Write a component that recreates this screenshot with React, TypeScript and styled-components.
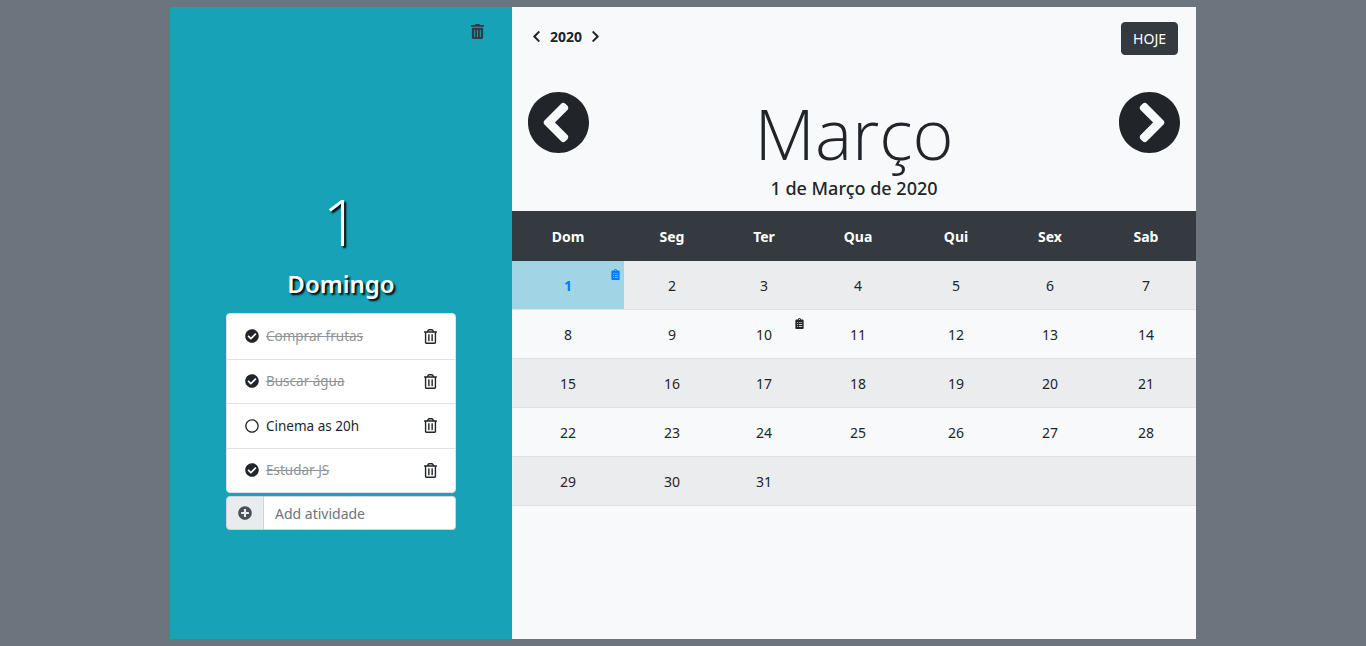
import { createGlobalStyle, styled } from "styled-components";
import {
  FaCheckCircle,
  FaChevronCircleLeft,
  FaChevronCircleRight,
  FaChevronLeft,
  FaChevronRight,
  FaClipboardList,
  FaPlusCircle,
  FaRegCircle,
  FaRegTrashAlt,
  FaTrashAlt,
} from "react-icons/fa";

const GlobalStyle = createGlobalStyle`
  * { box-sizing: border-box; }
  body {
    margin: 0;
    background-color: #6c757d;
    color: #212529;
    font-family: "Noto Sans", "Open Sans", sans-serif;
    font-size: 14px;
  }
`;

const columns = "112px 96px 88px 100px 96px 92px 100px";

const Page = styled.div`
  display: flex;
  justify-content: flex-start;
  height: 646px;
  padding: 7px 0 7px 170px;
`;

const DayPanel = styled.aside`
  background-color: #17a2b8;
  display: flex;
  flex-direction: column;
  align-items: center;
  width: 342px;
  padding: 17px 0 0;
`;

const DeleteAll = styled.div`
  align-self: flex-end;
  color: #343a40;
  display: flex;
  font-size: 15px;
  height: 16px;
  margin: 0 27px 0 0;
`;

const DayNumber = styled.div`
  color: #fff;
  font-family: "Open Sans", sans-serif;
  font-size: 64px;
  font-weight: 300;
  line-height: 88px;
  margin: 138px 0 0;
  text-shadow: 2px 2px 2px #000;
`;

const DayName = styled.div`
  color: #fff;
  font-size: 24px;
  font-weight: 600;
  line-height: 32px;
  margin: 2px 0 0;
  text-shadow: 2px 2px 2px #000;
`;

const Tasks = styled.ul`
  background-color: #fff;
  border: 1px solid #dee2e6;
  border-radius: 4px;
  list-style: none;
  margin: 13px 0 0;
  padding: 0;
  width: 230px;
`;

const Task = styled.li`
  display: flex;
  align-items: center;
  height: 44.5px;
  padding: 0 17px 0 18px;
  & + & {
    border-top: 1px solid #dee2e6;
  }
`;

const TaskCheck = styled.span`
  color: #212529;
  display: flex;
  font-size: 14px;
  margin: 0 7px 0 0;
`;

const TaskTitle = styled.span<{ $done: boolean }>`
  color: ${(p) => (p.$done ? "#8f9499" : "#212529")};
  flex: 1;
  font-size: 13.5px;
  text-decoration: ${(p) => (p.$done ? "line-through" : "none")};
`;

const TaskDelete = styled.span`
  color: #212529;
  display: flex;
  font-size: 15px;
`;

const AddRow = styled.div`
  display: flex;
  height: 34px;
  margin: 3px 0 0;
  width: 230px;
`;

const AddButton = styled.span`
  background-color: #e9ecef;
  border: 1px solid #ced4da;
  border-radius: 4px 0 0 4px;
  color: #495057;
  display: flex;
  align-items: center;
  justify-content: center;
  font-size: 14px;
  width: 38px;
`;

const AddInput = styled.input`
  border: 1px solid #ced4da;
  border-left: 0;
  border-radius: 0 4px 4px 0;
  color: #495057;
  flex: 1;
  font-family: inherit;
  font-size: 14px;
  min-width: 0;
  padding: 0 11px;
  &::placeholder {
    color: #6c757d;
    opacity: 1;
  }
`;

const CalendarPanel = styled.main`
  background-color: #f8f9fa;
  width: 684px;
`;

const TopBar = styled.div`
  display: flex;
  align-items: flex-start;
  justify-content: space-between;
  height: 84px;
  padding: 15px 18px 0 18px;
`;

const YearNav = styled.div`
  display: flex;
  align-items: center;
  gap: 7px;
  font-size: 14px;
  font-weight: 700;
  height: 28px;
  svg {
    font-size: 13px;
  }
`;

const TodayButton = styled.button`
  background-color: #343a40;
  border: 1px solid #343a40;
  border-radius: 4px;
  color: #fff;
  font-family: inherit;
  font-size: 14px;
  height: 33px;
  padding: 0 11px;
`;

const MonthRow = styled.div`
  display: flex;
  align-items: flex-start;
  justify-content: space-between;
  height: 120px;
  padding: 0 15px;
`;

const MonthArrow = styled.span`
  color: #212529;
  display: flex;
  font-size: 63px;
`;

const MonthTitle = styled.div`
  display: flex;
  flex-direction: column;
  align-items: center;
`;

const MonthName = styled.div`
  font-family: "Open Sans", sans-serif;
  font-size: 70px;
  font-weight: 300;
  line-height: 84px;
`;

const FullDate = styled.div`
  font-size: 18px;
  font-weight: 500;
  line-height: 26px;
`;

const HeadRow = styled.div`
  background-color: #343a40;
  color: #fff;
  display: grid;
  grid-template-columns: ${columns};
  align-items: center;
  height: 50px;
`;

const HeadCell = styled.div`
  font-size: 14px;
  font-weight: 700;
  text-align: center;
`;

const WeekRow = styled.div<{ $striped: boolean }>`
  background-color: ${(p) => (p.$striped ? "#ebecee" : "transparent")};
  border-bottom: 1px solid #dee2e6;
  display: grid;
  grid-template-columns: ${columns};
  height: 49px;
`;

const DayCell = styled.div<{ $selected?: boolean }>`
  background-color: ${(p) => (p.$selected ? "#a1d5e6" : "transparent")};
  color: ${(p) => (p.$selected ? "#007bff" : "#212529")};
  display: flex;
  align-items: center;
  justify-content: center;
  font-size: 14px;
  font-weight: ${(p) => (p.$selected ? 700 : 400)};
  position: relative;
`;

const NoteBadge = styled.span`
  display: flex;
  font-size: 11px;
  position: absolute;
  top: 8px;
  right: 3px;
`;

const tasks = [
  { title: "Comprar frutas", done: true },
  { title: "Buscar água", done: true },
  { title: "Cinema as 20h", done: false },
  { title: "Estudar JS", done: true },
];

const weekDays = ["Dom", "Seg", "Ter", "Qua", "Qui", "Sex", "Sab"];

const weeks = [
  [1, 2, 3, 4, 5, 6, 7],
  [8, 9, 10, 11, 12, 13, 14],
  [15, 16, 17, 18, 19, 20, 21],
  [22, 23, 24, 25, 26, 27, 28],
  [29, 30, 31, 0, 0, 0, 0],
];

const daysWithNotes = [1, 10];

export default function App() {
  return (
    <Page>
      <GlobalStyle />
      <DayPanel>
        <DeleteAll>
          <FaTrashAlt />
        </DeleteAll>
        <DayNumber>1</DayNumber>
        <DayName>Domingo</DayName>
        <Tasks>
          {tasks.map((task) => (
            <Task key={task.title}>
              <TaskCheck>{task.done ? <FaCheckCircle /> : <FaRegCircle />}</TaskCheck>
              <TaskTitle $done={task.done}>{task.title}</TaskTitle>
              <TaskDelete>
                <FaRegTrashAlt />
              </TaskDelete>
            </Task>
          ))}
        </Tasks>
        <AddRow>
          <AddButton>
            <FaPlusCircle />
          </AddButton>
          <AddInput placeholder="Add atividade" />
        </AddRow>
      </DayPanel>
      <CalendarPanel>
        <TopBar>
          <YearNav>
            <FaChevronLeft />
            2020
            <FaChevronRight />
          </YearNav>
          <TodayButton>HOJE</TodayButton>
        </TopBar>
        <MonthRow>
          <MonthArrow>
            <FaChevronCircleLeft />
          </MonthArrow>
          <MonthTitle>
            <MonthName>Março</MonthName>
            <FullDate>1 de Março de 2020</FullDate>
          </MonthTitle>
          <MonthArrow>
            <FaChevronCircleRight />
          </MonthArrow>
        </MonthRow>
        <HeadRow>
          {weekDays.map((day) => (
            <HeadCell key={day}>{day}</HeadCell>
          ))}
        </HeadRow>
        {weeks.map((week, i) => (
          <WeekRow key={week[0]} $striped={i % 2 === 0}>
            {week.map((day, j) => (
              <DayCell key={j} $selected={day === 1}>
                {day > 0 && day}
                {daysWithNotes.includes(day) && (
                  <NoteBadge>
                    <FaClipboardList />
                  </NoteBadge>
                )}
              </DayCell>
            ))}
          </WeekRow>
        ))}
      </CalendarPanel>
    </Page>
  );
}
